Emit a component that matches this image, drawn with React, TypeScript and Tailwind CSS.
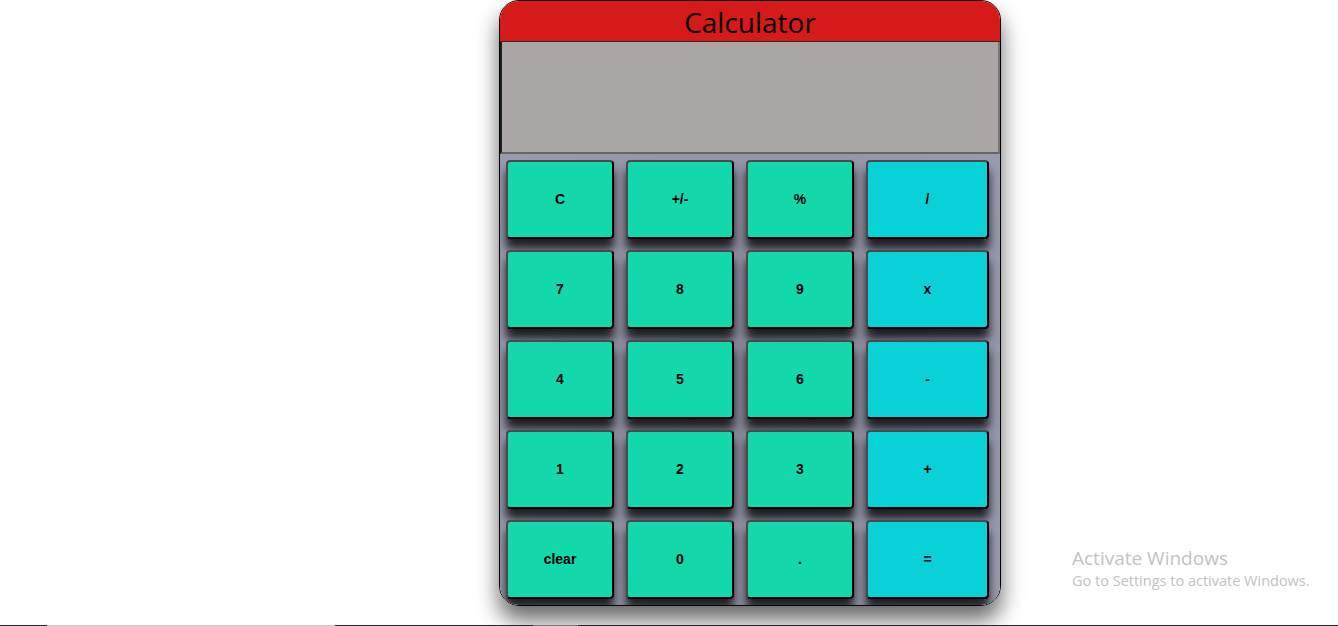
import React from "react";

const keys: { label: string; op?: boolean }[] = [
  { label: "C" },
  { label: "+/-" },
  { label: "%" },
  { label: "/", op: true },
  { label: "7" },
  { label: "8" },
  { label: "9" },
  { label: "x", op: true },
  { label: "4" },
  { label: "5" },
  { label: "6" },
  { label: "-", op: true },
  { label: "1" },
  { label: "2" },
  { label: "3" },
  { label: "+", op: true },
  { label: "clear" },
  { label: "0" },
  { label: "." },
  { label: "=", op: true },
];

export default function App() {
  return (
    <div className="relative h-[626px] w-full overflow-hidden bg-white">
      <div className="ml-[499px] w-[502px] overflow-hidden rounded-[20px] border border-black shadow-[0_14px_22px_rgba(0,0,0,0.6)]">
        <div
          className="flex h-[41px] items-center justify-center border-b border-[#2a2a2a] bg-[#d61a1a] pt-px text-[28px] leading-none text-black"
          style={{ fontFamily: '"Open Sans", "Noto Sans", sans-serif' }}
        >
          Calculator
        </div>
        <div className="h-[112px] border-2 border-t-0 border-l-[#1e1e1e] border-r-[#777] border-b-[#666] bg-[#aaa6a5]" />
        <div className="grid grid-cols-[108px_108px_108px_1fr] gap-x-3 gap-y-[11px] bg-[radial-gradient(ellipse_at_center,#88889d_0%,#9b9bb0_100%)] pt-[6px] pr-[11px] pb-[6px] pl-[6px]">
          {keys.map((k) => (
            <button
              key={k.label}
              className={
                "flex h-[79px] items-center justify-center rounded-[4px] border-2 border-t-[#4a4a4a] border-l-[#4a4a4a] border-r-black border-b-black text-[14px] font-bold text-black shadow-[0_10px_10px_rgba(0,0,0,0.8)] " +
                (k.op ? "bg-[#08d1d8]" : "bg-[#13d8ab]")
              }
              style={{ fontFamily: '"Liberation Sans", Arial, sans-serif' }}
            >
              {k.label}
            </button>
          ))}
        </div>
      </div>

      <div
        className="absolute top-[546px] left-[1072px] text-[#c2c2c2]"
        style={{ fontFamily: '"Open Sans", "Noto Sans", sans-serif' }}
      >
        <div className="text-[19px] leading-[25px]">Activate Windows</div>
        <div className="text-[14.5px] leading-[20px]">Go to Settings to activate Windows.</div>
      </div>

      <div className="absolute bottom-0 left-0 flex h-px w-full">
        <div className="w-[47px] bg-[#1f2a30]" />
        <div className="w-[288px] bg-[#c8c8c8]" />
        <div className="w-[198px] bg-[#1f2a30]" />
        <div className="w-[45px] bg-[#777]" />
        <div className="flex-1 bg-[#1f2a30]" />
      </div>
    </div>
  );
}
